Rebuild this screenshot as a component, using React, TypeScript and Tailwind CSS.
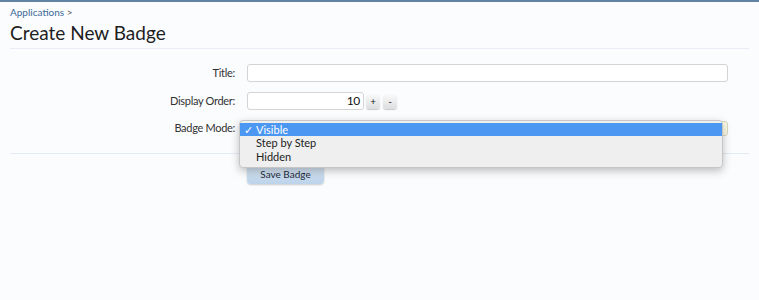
export default function App() {
  return (
    <div className="min-h-[300px] bg-[#fbfcfe] border-t-2 border-[#6283a4] font-['Lato','Liberation_Sans',sans-serif] text-[#222]">
      <div className="px-[10px]">
        {/* Breadcrumb + title */}
        <div className="pt-[4px] text-[10px] leading-[12px] text-[#3d6a97]">
          Applications <span className="text-[#555]">&gt;</span>
        </div>
        <h1 className="mt-[3px] text-[19px] leading-[24px] text-[#1e1e1e]">Create New Badge</h1>
        <div className="mt-[3px] h-px bg-[#e8ecf4]" />

        {/* Form */}
        <div className="mt-[15px] grid grid-cols-[225px_1fr] gap-x-[12px] gap-y-[10px] items-center text-[11px] tracking-[-0.3px] text-[#333]">
          <label className="text-right">Title:</label>
          <div className="pr-[21px]">
            <div className="h-[18px] rounded-[3px] border border-[#d4d4d4] bg-white" />
          </div>

          <label className="text-right">Display Order:</label>
          <div className="flex items-center gap-[2px]">
            <div className="h-[18px] w-[117px] rounded-[3px] border border-[#d4d4d4] bg-white flex items-center justify-end pr-[3px] text-[12px] text-[#111]">
              10
            </div>
            <button className="h-[15px] w-[14px] rounded-[3px] bg-gradient-to-b from-[#fafafa] to-[#dedede] shadow-[0_1px_1px_rgba(0,0,0,0.2)] text-[10px] leading-[15px] text-[#222]">
              +
            </button>
            <button className="ml-[1px] h-[15px] w-[14px] rounded-[3px] bg-gradient-to-b from-[#fafafa] to-[#dedede] shadow-[0_1px_1px_rgba(0,0,0,0.2)] text-[10px] leading-[15px] text-[#222]">
              -
            </button>
          </div>

          <label className="text-right">Badge Mode:</label>
          <div className="relative pr-[21px]">
            {/* closed select behind the menu */}
            <div className="h-[15px] rounded-[3px] border border-[#d8d8c0] bg-[#fdfbe6]" />
            {/* open menu */}
            <div className="absolute left-[-8px] top-[-1px] w-[484px] h-[48px] rounded-[4px] border border-[#c6c6c6] bg-[#efefef] shadow-[0_3px_8px_rgba(0,0,0,0.25)] pt-[2px] text-[11px] tracking-normal z-10">
              <div className="h-[13px] bg-[#4b97f2] text-white flex items-center leading-[13px]">
                <span className="w-[16px] pl-[4px] text-[11px]">✓</span>
                <span>Visible</span>
              </div>
              <div className="h-[14px] pl-[16px] flex items-center text-[#222]">Step by Step</div>
              <div className="h-[14px] pl-[16px] flex items-center text-[#222]">Hidden</div>
            </div>
          </div>
        </div>

        <div className="mt-[16px] h-px bg-[#e3eaf2]" />

        <div className="mt-[11px] pl-[237px] flex">
          <button className="h-[19px] w-[77px] rounded-[4px] bg-gradient-to-b from-[#dae7f4] to-[#bcd3ea] shadow-[0_1px_2px_rgba(0,0,0,0.2)] text-[10px] text-[#1e2a38]">
            Save Badge
          </button>
        </div>
      </div>
    </div>
  );
}
